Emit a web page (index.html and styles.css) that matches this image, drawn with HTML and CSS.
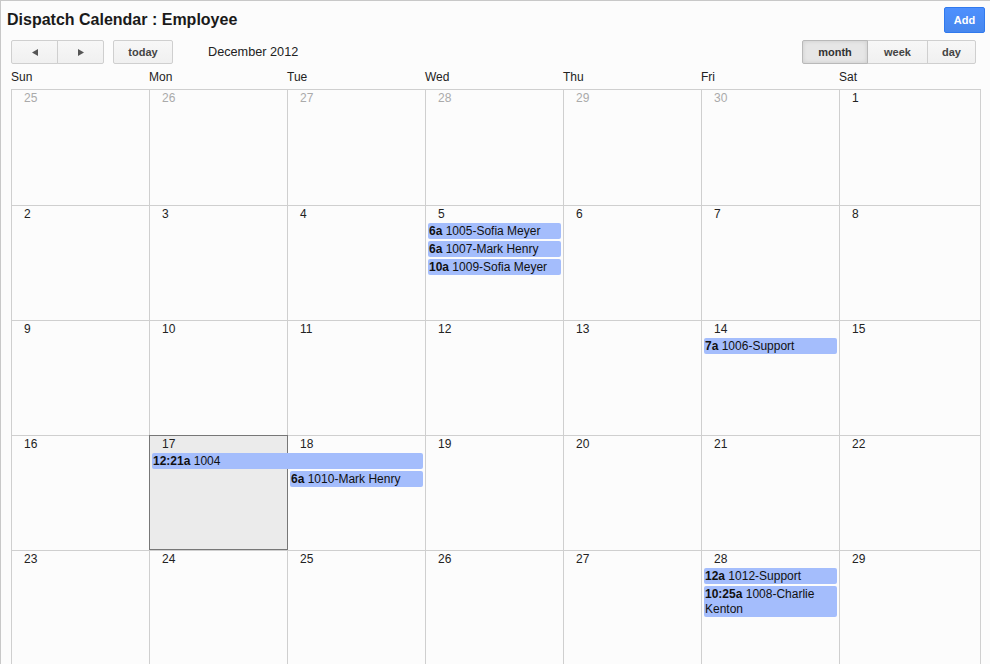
FILE: index.html
```html
<!DOCTYPE html>
<html>
<head>
<meta charset="utf-8">
<title>Dispatch Calendar</title>
<link rel="stylesheet" href="styles.css">
</head>
<body>
<div class="frame">
  <div class="topbar">
    <h1 class="title">Dispatch Calendar : Employee</h1>
    <button class="btn-add">Add</button>
  </div>
  <div class="toolbar">
    <div class="tb-left">
      <div class="group">
        <button class="btn nav"><svg width="6" height="7" viewBox="0 0 6 7"><path d="M0 3.5L6 0V7Z" fill="#555"/></svg></button>
        <button class="btn nav"><svg width="6" height="7" viewBox="0 0 6 7"><path d="M6 3.5L0 0V7Z" fill="#555"/></svg></button>
      </div>
      <button class="btn today-btn">today</button>
      <span class="month-title">December 2012</span>
    </div>
    <div class="group views">
      <button class="btn v-month active">month</button>
      <button class="btn v-week">week</button>
      <button class="btn v-day">day</button>
    </div>
  </div>
  <div class="dow">
    <div>Sun</div><div>Mon</div><div>Tue</div><div>Wed</div><div>Thu</div><div>Fri</div><div>Sat</div>
  </div>
  <div class="month">
    <div class="week">
      <div class="d other">25</div><div class="d other">26</div><div class="d other">27</div><div class="d other">28</div><div class="d other">29</div><div class="d other">30</div><div class="d">1</div>
    </div>
    <div class="week">
      <div class="d">2</div><div class="d">3</div><div class="d">4</div><div class="d">5</div><div class="d">6</div><div class="d">7</div><div class="d">8</div>
      <div class="ev c4 r2"><b>6a</b> 1005-Sofia Meyer</div>
      <div class="ev c4 r3"><b>6a</b> 1007-Mark Henry</div>
      <div class="ev c4 r4"><b>10a</b> 1009-Sofia Meyer</div>
    </div>
    <div class="week">
      <div class="d">9</div><div class="d">10</div><div class="d">11</div><div class="d">12</div><div class="d">13</div><div class="d">14</div><div class="d">15</div>
      <div class="ev c6 r2"><b>7a</b> 1006-Support</div>
    </div>
    <div class="week">
      <div class="d">16</div><div class="d today">17</div><div class="d">18</div><div class="d">19</div><div class="d">20</div><div class="d">21</div><div class="d">22</div>
      <div class="ev c2 span2 r2"><b>12:21a</b> 1004</div>
      <div class="ev c3 r3"><b>6a</b> 1010-Mark Henry</div>
    </div>
    <div class="week">
      <div class="d">23</div><div class="d">24</div><div class="d">25</div><div class="d">26</div><div class="d">27</div><div class="d">28</div><div class="d">29</div>
      <div class="ev c6 r2"><b>12a</b> 1012-Support</div>
      <div class="ev c6 r3"><b>10:25a</b> 1008-Charlie Kenton</div>
    </div>
  </div>
</div>
</body>
</html>
```
FILE: styles.css
```css
html, body {
  margin: 0;
  padding: 0;
  background: #fcfcfc;
  overflow: hidden;
}
body {
  font-family: "Liberation Sans", Arial, sans-serif;
  color: #222;
}
.frame {
  border-top: 1px solid #c8c8c8;
  border-left: 1px solid #c8c8c8;
  min-height: 700px;
  background: #fcfcfc;
}
.topbar {
  display: flex;
  align-items: center;
  justify-content: space-between;
  padding: 6px 5px 0 6px;
}
.title {
  margin: 0;
  font-size: 16px;
  font-weight: bold;
  line-height: 26px;
  color: #1a1a1a;
}
.btn-add {
  width: 41px;
  height: 26px;
  box-sizing: border-box;
  padding: 0;
  border: 1px solid #3079ed;
  border-radius: 2px;
  background: linear-gradient(#4d90fe, #4787ed);
  color: #fff;
  font: bold 11px "Liberation Sans", Arial, sans-serif;
}
.toolbar {
  display: flex;
  align-items: center;
  justify-content: space-between;
  margin-top: 7px;
  padding: 0 14px 0 10px;
}
.tb-left {
  display: flex;
  align-items: center;
}
.group {
  display: flex;
}
.group .btn + .btn {
  margin-left: -1px;
}
.btn {
  height: 24px;
  box-sizing: border-box;
  padding: 0;
  border: 1px solid #cfcfcf;
  border-radius: 2px;
  background: linear-gradient(#f7f7f7, #f0f0f0);
  color: #444;
  font: bold 11px "Liberation Sans", Arial, sans-serif;
  display: flex;
  align-items: center;
  justify-content: center;
}
.group .btn { border-radius: 0; }
.group .btn:first-child { border-radius: 2px 0 0 2px; }
.group .btn:last-child { border-radius: 0 2px 2px 0; }
.nav { width: 47px; }
.today-btn { width: 60px; margin-left: 9px; }
.month-title {
  margin-left: 35px;
  font-size: 12.7px;
  color: #222;
}
.v-month { width: 66px; }
.v-week { width: 61px; }
.v-day { width: 49px; }
.btn.active {
  background: #e6e6e6;
  border-color: #b9b9b9;
  box-shadow: inset 0 0 4px rgba(0, 0, 0, 0.12);
  color: #333;
  position: relative;
  z-index: 1;
}
.dow {
  display: grid;
  grid-template-columns: repeat(6, 138px) 141px;
  padding: 6px 0 5px 10px;
  font-size: 12px;
  line-height: 14px;
  color: #222;
}
.month {
  margin-left: 10px;
  width: 970px;
  box-sizing: border-box;
  border-right: 1px solid #cfcfcf;
}
.week {
  display: grid;
  grid-template-columns: repeat(6, 138px) 141px;
  grid-template-rows: 18px auto auto auto auto 1fr;
  height: 115px;
}
.week:first-child { height: 116px; }
.d {
  grid-row: 1 / -1;
  border-left: 1px solid #cfcfcf;
  border-top: 1px solid #cfcfcf;
  padding: 1px 0 0 12px;
  font-size: 12px;
  line-height: 14px;
  color: #222;
}
.d:nth-child(1) { grid-column: 1; }
.d:nth-child(2) { grid-column: 2; }
.d:nth-child(3) { grid-column: 3; }
.d:nth-child(4) { grid-column: 4; }
.d:nth-child(5) { grid-column: 5; }
.d:nth-child(6) { grid-column: 6; }
.d:nth-child(7) { grid-column: 7; }
.d.other { color: #aaa; }
.d.today {
  background: #ebebeb;
  border-left-color: #777;
  border-top-color: #777;
  box-shadow: 1px 0 0 #777, inset 0 -1px 0 #777;
  position: relative;
  z-index: 1;
}
.ev {
  position: relative;
  z-index: 2;
  margin: 0 2px 2px 3px;
  padding: 1px 1px 0;
  background: #a4bdfc;
  border-radius: 2px;
  font-size: 12px;
  line-height: 15px;
  color: #111;
}
.ev b { font-weight: bold; }
.c2 { grid-column: 2; }
.c3 { grid-column: 3; }
.c4 { grid-column: 4; }
.c6 { grid-column: 6; }
.c2.span2 { grid-column: 2 / span 2; }
.r2 { grid-row: 2; }
.r3 { grid-row: 3; }
.r4 { grid-row: 4; }
```
